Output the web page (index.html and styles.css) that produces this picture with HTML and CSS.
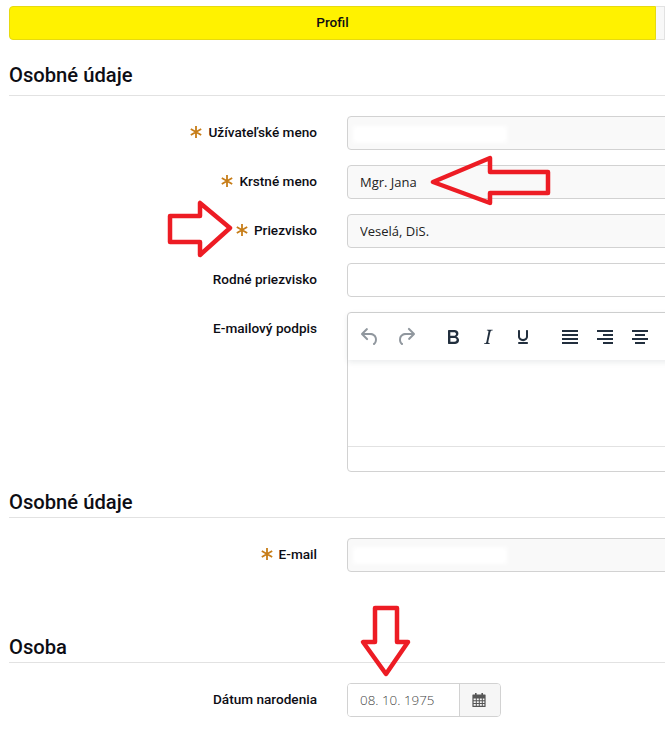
FILE: index.html
```html
<!DOCTYPE html>
<html lang="sk">
<head>
<meta charset="utf-8">
<title>Profil</title>
<link rel="stylesheet" href="styles.css">
</head>
<body>
<main class="page">
  <nav class="tabs">
    <div class="tab tab-active">Profil</div>
    <div class="tab tab-next"></div>
  </nav>

  <section class="section">
    <h2 class="section-title">Osobné údaje</h2>
    <div class="rows">
      <div class="row">
        <label class="label"><svg class="req" viewBox="0 0 12 12"><path d="M6 0v12M.8 3l10.4 6M11.2 3L.8 9"/></svg>Užívateľské meno</label>
        <div class="field"><input class="input input-ro" readonly value=""><span class="smudge smudge-a"></span></div>
      </div>
      <div class="row">
        <label class="label"><svg class="req" viewBox="0 0 12 12"><path d="M6 0v12M.8 3l10.4 6M11.2 3L.8 9"/></svg>Krstné meno</label>
        <div class="field"><input class="input input-ro" readonly value="Mgr. Jana"></div>
      </div>
      <div class="row">
        <label class="label"><svg class="req" viewBox="0 0 12 12"><path d="M6 0v12M.8 3l10.4 6M11.2 3L.8 9"/></svg>Priezvisko</label>
        <div class="field"><input class="input input-ro" readonly value="Veselá, DiS."></div>
      </div>
      <div class="row">
        <label class="label">Rodné priezvisko</label>
        <div class="field"><input class="input" value=""></div>
      </div>
      <div class="row">
        <label class="label">E-mailový podpis</label>
        <div class="editor">
          <div class="toolbar">
            <div class="tool-group">
              <span class="tool tool-off"><svg viewBox="0 0 24 24"><path d="M6.4 8H12c3.7 0 6.2 2 6.8 5.1.6 2.7-.4 5.6-2.3 6.8a1 1 0 0 1-1-1.8c1.1-.6 1.8-2.7 1.4-4.6-.5-2.1-2.1-3.5-4.9-3.5H6.4l3.3 3.3a1 1 0 1 1-1.4 1.4l-5-5a1 1 0 0 1 0-1.4l5-5a1 1 0 0 1 1.4 1.4L6.4 8z"/></svg></span>
              <span class="tool tool-off"><svg viewBox="0 0 24 24"><path d="M17.6 10H12c-2.8 0-4.4 1.4-4.9 3.5-.4 2 .3 4 1.4 4.6a1 1 0 1 1-1 1.8c-2-1.2-2.9-4.1-2.3-6.8.6-3 3-5.1 6.8-5.1h5.6l-3.3-3.3a1 1 0 1 1 1.4-1.4l5 5a1 1 0 0 1 0 1.4l-5 5a1 1 0 0 1-1.4-1.4l3.3-3.3z"/></svg></span>
            </div>
            <div class="tool-group">
              <span class="tool"><svg viewBox="0 0 24 24"><path d="M7.8 19c-.3 0-.5 0-.6-.2l-.2-.5V5.700c0-.2 0-.4.2-.5l.6-.2h5c1.500 0 2.700.3 3.500 1 .7.6 1.100 1.400 1.100 2.500a3 3 0 0 1-.6 1.900c-.4.6-1 1-1.600 1.200.4.1.9.3 1.300.6s.8.7 1 1.200c.4.4.5 1 .5 1.600 0 1.300-.4 2.300-1.300 3-.8.7-2.100 1-3.800 1H7.800zm5-8.300c.6 0 1.200-.1 1.600-.5.4-.3.6-.7.6-1.300 0-1.100-.8-1.700-2.300-1.700H9.300v3.500h3.400zm.5 6c.7 0 1.300-.1 1.700-.4.4-.4.6-.9.6-1.500s-.2-1-.7-1.400c-.4-.3-1-.4-2-.4H9.400v3.800h4z"/></svg></span>
              <span class="tool"><svg viewBox="0 0 24 24"><path d="M16.700 4.700l-.1.9h-.3c-.6 0-1 0-1.400.3-.3.3-.4.6-.5 1.100l-2.100 9.800v.6c0 .5.4.8 1.400.8h.2l-.2.8H8l.2-.8h.2c1.100 0 1.800-.5 2-1.500l2-9.800.1-.5c0-.6-.4-.8-1.400-.8h-.3l.2-.9h5.800z"/></svg></span>
              <span class="tool"><svg viewBox="0 0 24 24"><path d="M16 5c.6 0 1 .4 1 1v5.500a4 4 0 0 1-.4 1.800l-1 1.400a5.300 5.300 0 0 1-5.500 1 5 5 0 0 1-1.600-1c-.5-.4-.8-.9-1.100-1.400a4 4 0 0 1-.4-1.800V6c0-.6.4-1 1-1s1 .4 1 1v5.500c0 .3 0 .6.2 1l.6.7a3.300 3.300 0 0 0 2.200.8 3.400 3.400 0 0 0 2.200-.8c.3-.2.4-.5.6-.8l.2-.9V6c0-.6.4-1 1-1zM8 17h8c.6 0 1 .4 1 1s-.4 1-1 1H8a1 1 0 0 1 0-2z"/></svg></span>
            </div>
            <div class="tool-group">
              <span class="tool"><svg viewBox="0 0 24 24"><path d="M4 5h16v2H4zM4 9h16v2H4zM4 13h16v2H4zM4 17h16v2H4z"/></svg></span>
              <span class="tool"><svg viewBox="0 0 24 24"><path d="M4 5h16v2H4zM10 9h10v2H10zM4 13h16v2H4zM10 17h10v2H10z"/></svg></span>
              <span class="tool"><svg viewBox="0 0 24 24"><path d="M4 5h16v2H4zM7 9h10v2H7zM4 13h16v2H4zM7 17h10v2H7z"/></svg></span>
            </div>
          </div>
          <div class="editor-body"></div>
          <div class="editor-status"></div>
        </div>
      </div>
    </div>
  </section>

  <section class="section section-second">
    <h2 class="section-title section-title-low">Osobné údaje</h2>
    <div class="rows">
      <div class="row">
        <label class="label"><svg class="req" viewBox="0 0 12 12"><path d="M6 0v12M.8 3l10.4 6M11.2 3L.8 9"/></svg>E-mail</label>
        <div class="field"><input class="input input-ro" readonly value=""><span class="smudge smudge-b"></span></div>
      </div>
    </div>
  </section>

  <section class="section section-third">
    <h2 class="section-title section-title-low">Osoba</h2>
    <div class="rows">
      <div class="row">
        <label class="label">Dátum narodenia</label>
        <div class="date">
          <input class="date-input" value="08. 10. 1975">
          <span class="date-btn"><svg viewBox="0 0 14 14"><path d="M3 0h1.600v2H3zM9.400 0H11v2H9.400z"/><path fill-rule="evenodd" d="M1 1.500h12a.6.6 0 0 1 .6.6v11.300a.6.6 0 0 1-.6.6H1a.6.6 0 0 1-.6-.6V2.100a.6.6 0 0 1 .6-.6zM1.600 5.500v1.800h2.200V5.500zM4.800 5.500v1.800h2V5.500zM7.800 5.500v1.800h2V5.500zM10.800 5.500v1.800h1.600V5.500zM1.600 8.200v1.800h2.200V8.200zM4.800 8.200v1.800h2V8.200zM7.800 8.200v1.800h2V8.200zM10.800 8.200v1.800h1.600V8.200zM1.600 10.900v1.800h2.200v-1.800zM4.800 10.900v1.800h2v-1.800zM7.800 10.900v1.800h2v-1.800zM10.800 10.900v1.800h1.600v-1.800z"/></svg></span>
        </div>
      </div>
    </div>
  </section>
</main>

<svg class="arrows" viewBox="0 0 665 745" aria-hidden="true">
  <path d="M433 182L490 158V172H548V193H490V203Z"/>
  <path d="M230 228L200 203V216H170V242H200V255Z"/>
  <path d="M375 608H397V642H408L386 674L363 642H375Z"/>
</svg>
</body>
</html>
```
FILE: styles.css
```css
* { box-sizing: border-box; }
html, body { margin: 0; padding: 0; height: 100%; overflow: hidden; background: #fff; }
body { font-family: Roboto, "Liberation Sans", sans-serif; color: #0d0d14; position: relative; }

.page { padding: 6px 0 0 9px; width: 665px; overflow: hidden; }

.tabs { display: flex; height: 34px; }
.tab { font-size: 13.6px; font-weight: 500; display: flex; align-items: center; justify-content: center; padding-bottom: 2px; }
.tab-active { width: 647px; background: #fff200; border: 1px solid #e6da10; border-radius: 4px 0 0 4px; }
.tab-next { flex: 1; background: #f8f8f8; border: 1px solid #e2e2e2; border-left: 0; }

.section { margin-top: 20px; }
.section-second { margin-top: 10px; }
.section-third { margin-top: 55px; }

.section-title { margin: 0 0 20px; height: 36px; font-size: 20.2px; line-height: 30px; font-weight: 500; border-bottom: 1px solid #e2e2e2; }
.section-title-low { padding-top: 5px; }

.rows { display: flex; flex-direction: column; gap: 15px; }
.row { display: grid; grid-template-columns: 308px 500px; column-gap: 30px; align-items: start; }

.label { height: 34px; display: flex; align-items: center; justify-content: flex-end; font-size: 13.6px; font-weight: 500; padding-bottom: 2px; }
.req { width: 12px; height: 12px; margin-right: 6px; fill: none; stroke: #c77d18; stroke-width: 1.8; }

.field { position: relative; height: 34px; }
.input { display: block; width: 100%; height: 34px; padding: 0 12px; border: 1px solid #d2d2d2; border-radius: 4px; background: #fff; font: 400 13px "Open Sans", sans-serif; color: #222; outline: none; }
.input-ro { background: #f9f9f9; }

.smudge { position: absolute; background: #fff; filter: blur(2px); }
.smudge-a { left: 6px; top: 10px; width: 154px; height: 17px; }
.smudge-b { left: 6px; top: 9px; width: 154px; height: 17px; }

.editor { height: 160px; border: 1px solid #d2d2d2; border-radius: 4px; display: flex; flex-direction: column; }
.toolbar { height: 47px; display: flex; align-items: center; padding: 0 4px; gap: 11.5px; box-shadow: 0 2px 6px rgba(34, 47, 62, 0.1); }
.tool-group { display: flex; }
.tool { width: 35px; height: 34px; display: flex; align-items: center; justify-content: center; }
.tool-off { width: 36px; }
.tool svg { width: 24px; height: 24px; fill: #222f3e; }
.tool-off svg { fill: rgba(34, 47, 62, 0.5); }
.editor-body { flex: 1; }
.editor-status { height: 25px; border-top: 1px solid #e2e2e2; }

.date { display: flex; width: 154px; height: 34px; border: 1px solid #d2d2d2; border-radius: 4px; overflow: hidden; }
.date-input { width: 112px; border: 0; border-right: 1px solid #d2d2d2; padding: 0 12px; font: 300 13.4px "Open Sans", sans-serif; color: #444; outline: none; background: #fff; }
.date-btn { flex: 1; background: #f6f6f6; display: flex; align-items: center; justify-content: center; padding-right: 3px; }
.date-btn svg { width: 14px; height: 14px; fill: #555; }

.arrows { position: absolute; left: 0; top: 0; width: 665px; height: 745px; pointer-events: none; }
.arrows path { fill: none; stroke: #ed1c24; stroke-width: 4.5; stroke-linejoin: round; }
```
